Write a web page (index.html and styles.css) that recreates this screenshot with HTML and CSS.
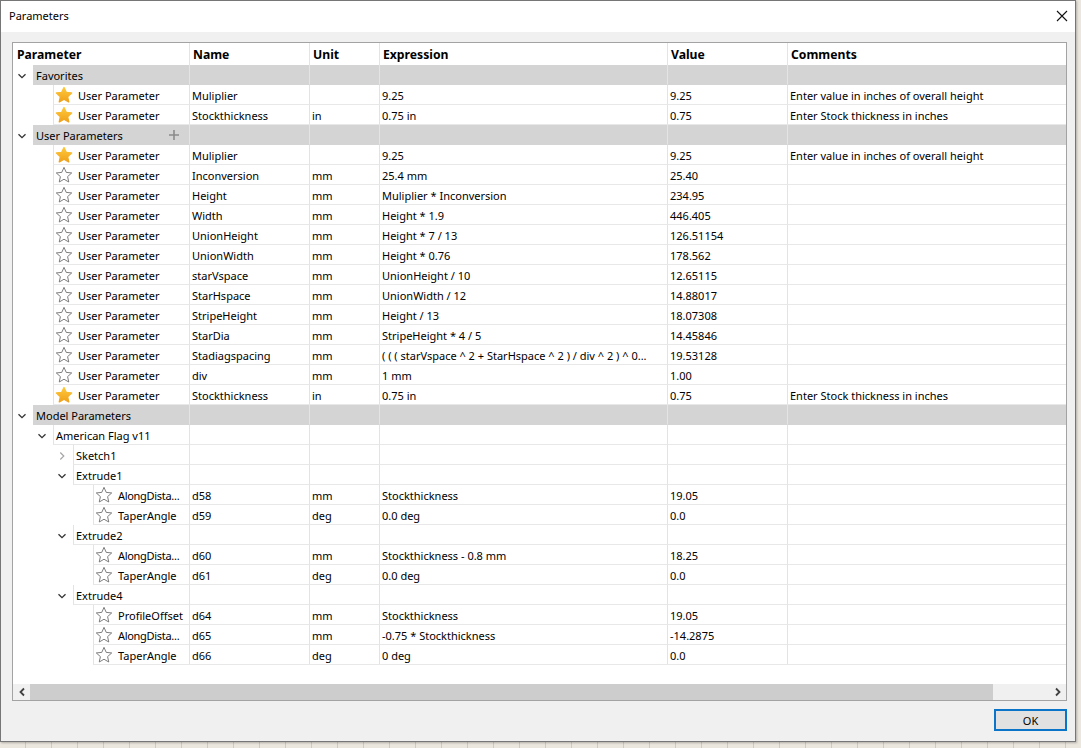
FILE: index.html
```html
<!DOCTYPE html>
<html>
<head>
<meta charset="utf-8">
<title>Parameters</title>
<link rel="stylesheet" href="styles.css">
</head>
<body>
<svg class="defs" width="0" height="0" aria-hidden="true">
  <defs>
    <linearGradient id="gold" x1="0" y1="0" x2="0" y2="1">
      <stop offset="0" stop-color="#fdc93b"/>
      <stop offset="1" stop-color="#f0a11a"/>
    </linearGradient>
    <symbol id="star-on" viewBox="0 0 20 20">
      <path d="M10 1.8 L12.47 7.1 L18.4 7.8 L13.99 11.8 L15.2 17.6 L10 14.7 L4.8 17.6 L6.01 11.8 L1.6 7.8 L7.53 7.1 Z" fill="url(#gold)" stroke="url(#gold)" stroke-width="1.6" stroke-linejoin="round"/>
    </symbol>
    <symbol id="star-off" viewBox="0 0 20 20">
      <path d="M10 1.5 L12.47 7.1 L18.56 7.72 L13.99 11.8 L15.29 17.78 L10 14.7 L4.71 17.78 L6.01 11.8 L1.44 7.72 L7.53 7.1 Z" fill="#fff" stroke="#6f6f6f" stroke-width="1" stroke-linejoin="miter"/>
    </symbol>
    <symbol id="chev-down" viewBox="0 0 10 10">
      <polyline points="1.5,3.2 5,6.7 8.5,3.2" fill="none" stroke="#333" stroke-width="1.3"/>
    </symbol>
    <symbol id="chev-right" viewBox="0 0 10 10">
      <polyline points="3.3,1.5 6.8,5 3.3,8.5" fill="none" stroke="#a6a6a6" stroke-width="1.2"/>
    </symbol>
  </defs>
</svg>

<div class="dialog">
  <div class="titlebar">
    <span class="title">Parameters</span>
    <svg class="close" width="12" height="12" viewBox="0 0 12 12"><path d="M1 1 L11 11 M11 1 L1 11" stroke="#111" stroke-width="1.1"/></svg>
  </div>

  <div class="content">
    <div class="frame">
      <div class="head">
        <div class="h first">Parameter</div>
        <div class="h">Name</div>
        <div class="h">Unit</div>
        <div class="h">Expression</div>
        <div class="h">Value</div>
        <div class="h">Comments</div>
      </div>

      <div class="rows">
        <!-- Favorites -->
        <div class="row group">
          <div class="c0 d0"><span class="tog"><svg><use href="#chev-down"/></svg></span><div class="cell txt">Favorites</div></div>
          <div class="c"></div><div class="c"></div><div class="c"></div><div class="c"></div><div class="c"></div>
        </div>
        <div class="row">
          <div class="c0 d1"><span class="tog"></span><div class="cell"><svg class="star"><use href="#star-on"/></svg>User Parameter</div></div>
          <div class="c">Muliplier</div><div class="c"></div><div class="c">9.25</div><div class="c">9.25</div><div class="c">Enter value in inches of overall height</div>
        </div>
        <div class="row">
          <div class="c0 d1"><span class="tog"></span><div class="cell"><svg class="star"><use href="#star-on"/></svg>User Parameter</div></div>
          <div class="c">Stockthickness</div><div class="c">in</div><div class="c">0.75 in</div><div class="c">0.75</div><div class="c">Enter Stock thickness in inches</div>
        </div>

        <!-- User Parameters -->
        <div class="row group">
          <div class="c0 d0"><span class="tog"><svg><use href="#chev-down"/></svg></span><div class="cell txt">User Parameters<svg class="plus" width="10" height="10" viewBox="0 0 10 10"><path d="M5 0 V10 M0 5 H10" stroke="#8b8b8b" stroke-width="1.6"/></svg></div></div>
          <div class="c"></div><div class="c"></div><div class="c"></div><div class="c"></div><div class="c"></div>
        </div>
        <div class="row">
          <div class="c0 d1"><span class="tog"></span><div class="cell"><svg class="star"><use href="#star-on"/></svg>User Parameter</div></div>
          <div class="c">Muliplier</div><div class="c"></div><div class="c">9.25</div><div class="c">9.25</div><div class="c">Enter value in inches of overall height</div>
        </div>
        <div class="row">
          <div class="c0 d1"><span class="tog"></span><div class="cell"><svg class="star"><use href="#star-off"/></svg>User Parameter</div></div>
          <div class="c">Inconversion</div><div class="c">mm</div><div class="c">25.4 mm</div><div class="c">25.40</div><div class="c"></div>
        </div>
        <div class="row">
          <div class="c0 d1"><span class="tog"></span><div class="cell"><svg class="star"><use href="#star-off"/></svg>User Parameter</div></div>
          <div class="c">Height</div><div class="c">mm</div><div class="c">Muliplier * Inconversion</div><div class="c">234.95</div><div class="c"></div>
        </div>
        <div class="row">
          <div class="c0 d1"><span class="tog"></span><div class="cell"><svg class="star"><use href="#star-off"/></svg>User Parameter</div></div>
          <div class="c">Width</div><div class="c">mm</div><div class="c">Height * 1.9</div><div class="c">446.405</div><div class="c"></div>
        </div>
        <div class="row">
          <div class="c0 d1"><span class="tog"></span><div class="cell"><svg class="star"><use href="#star-off"/></svg>User Parameter</div></div>
          <div class="c">UnionHeight</div><div class="c">mm</div><div class="c">Height * 7 / 13</div><div class="c">126.51154</div><div class="c"></div>
        </div>
        <div class="row">
          <div class="c0 d1"><span class="tog"></span><div class="cell"><svg class="star"><use href="#star-off"/></svg>User Parameter</div></div>
          <div class="c">UnionWidth</div><div class="c">mm</div><div class="c">Height * 0.76</div><div class="c">178.562</div><div class="c"></div>
        </div>
        <div class="row">
          <div class="c0 d1"><span class="tog"></span><div class="cell"><svg class="star"><use href="#star-off"/></svg>User Parameter</div></div>
          <div class="c">starVspace</div><div class="c">mm</div><div class="c">UnionHeight / 10</div><div class="c">12.65115</div><div class="c"></div>
        </div>
        <div class="row">
          <div class="c0 d1"><span class="tog"></span><div class="cell"><svg class="star"><use href="#star-off"/></svg>User Parameter</div></div>
          <div class="c">StarHspace</div><div class="c">mm</div><div class="c">UnionWidth / 12</div><div class="c">14.88017</div><div class="c"></div>
        </div>
        <div class="row">
          <div class="c0 d1"><span class="tog"></span><div class="cell"><svg class="star"><use href="#star-off"/></svg>User Parameter</div></div>
          <div class="c">StripeHeight</div><div class="c">mm</div><div class="c">Height / 13</div><div class="c">18.07308</div><div class="c"></div>
        </div>
        <div class="row">
          <div class="c0 d1"><span class="tog"></span><div class="cell"><svg class="star"><use href="#star-off"/></svg>User Parameter</div></div>
          <div class="c">StarDia</div><div class="c">mm</div><div class="c">StripeHeight * 4 / 5</div><div class="c">14.45846</div><div class="c"></div>
        </div>
        <div class="row">
          <div class="c0 d1"><span class="tog"></span><div class="cell"><svg class="star"><use href="#star-off"/></svg>User Parameter</div></div>
          <div class="c">Stadiagspacing</div><div class="c">mm</div><div class="c">( ( ( starVspace ^ 2 + StarHspace ^ 2 ) / div ^ 2 ) ^ 0...</div><div class="c">19.53128</div><div class="c"></div>
        </div>
        <div class="row">
          <div class="c0 d1"><span class="tog"></span><div class="cell"><svg class="star"><use href="#star-off"/></svg>User Parameter</div></div>
          <div class="c">div</div><div class="c">mm</div><div class="c">1 mm</div><div class="c">1.00</div><div class="c"></div>
        </div>
        <div class="row">
          <div class="c0 d1"><span class="tog"></span><div class="cell"><svg class="star"><use href="#star-on"/></svg>User Parameter</div></div>
          <div class="c">Stockthickness</div><div class="c">in</div><div class="c">0.75 in</div><div class="c">0.75</div><div class="c">Enter Stock thickness in inches</div>
        </div>

        <!-- Model Parameters -->
        <div class="row group">
          <div class="c0 d0"><span class="tog"><svg><use href="#chev-down"/></svg></span><div class="cell txt">Model Parameters</div></div>
          <div class="c"></div><div class="c"></div><div class="c"></div><div class="c"></div><div class="c"></div>
        </div>
        <div class="row">
          <div class="c0 d1"><span class="tog"><svg><use href="#chev-down"/></svg></span><div class="cell txt">American Flag v11</div></div>
          <div class="c"></div><div class="c"></div><div class="c"></div><div class="c"></div><div class="c"></div>
        </div>
        <div class="row">
          <div class="c0 d2"><span class="tog"><svg><use href="#chev-right"/></svg></span><div class="cell txt">Sketch1</div></div>
          <div class="c"></div><div class="c"></div><div class="c"></div><div class="c"></div><div class="c"></div>
        </div>
        <div class="row">
          <div class="c0 d2"><span class="tog"><svg><use href="#chev-down"/></svg></span><div class="cell txt">Extrude1</div></div>
          <div class="c"></div><div class="c"></div><div class="c"></div><div class="c"></div><div class="c"></div>
        </div>
        <div class="row">
          <div class="c0 d3"><span class="tog"></span><div class="cell"><svg class="star"><use href="#star-off"/></svg><span class="tight">AlongDista...</span></div></div>
          <div class="c">d58</div><div class="c">mm</div><div class="c">Stockthickness</div><div class="c">19.05</div><div class="c"></div>
        </div>
        <div class="row">
          <div class="c0 d3"><span class="tog"></span><div class="cell"><svg class="star"><use href="#star-off"/></svg>TaperAngle</div></div>
          <div class="c">d59</div><div class="c">deg</div><div class="c">0.0 deg</div><div class="c">0.0</div><div class="c"></div>
        </div>
        <div class="row">
          <div class="c0 d2"><span class="tog"><svg><use href="#chev-down"/></svg></span><div class="cell txt">Extrude2</div></div>
          <div class="c"></div><div class="c"></div><div class="c"></div><div class="c"></div><div class="c"></div>
        </div>
        <div class="row">
          <div class="c0 d3"><span class="tog"></span><div class="cell"><svg class="star"><use href="#star-off"/></svg><span class="tight">AlongDista...</span></div></div>
          <div class="c">d60</div><div class="c">mm</div><div class="c">Stockthickness - 0.8 mm</div><div class="c">18.25</div><div class="c"></div>
        </div>
        <div class="row">
          <div class="c0 d3"><span class="tog"></span><div class="cell"><svg class="star"><use href="#star-off"/></svg>TaperAngle</div></div>
          <div class="c">d61</div><div class="c">deg</div><div class="c">0.0 deg</div><div class="c">0.0</div><div class="c"></div>
        </div>
        <div class="row">
          <div class="c0 d2"><span class="tog"><svg><use href="#chev-down"/></svg></span><div class="cell txt">Extrude4</div></div>
          <div class="c"></div><div class="c"></div><div class="c"></div><div class="c"></div><div class="c"></div>
        </div>
        <div class="row">
          <div class="c0 d3"><span class="tog"></span><div class="cell"><svg class="star"><use href="#star-off"/></svg>ProfileOffset</div></div>
          <div class="c">d64</div><div class="c">mm</div><div class="c">Stockthickness</div><div class="c">19.05</div><div class="c"></div>
        </div>
        <div class="row">
          <div class="c0 d3"><span class="tog"></span><div class="cell"><svg class="star"><use href="#star-off"/></svg><span class="tight">AlongDista...</span></div></div>
          <div class="c">d65</div><div class="c">mm</div><div class="c">-0.75 * Stockthickness</div><div class="c">-14.2875</div><div class="c"></div>
        </div>
        <div class="row">
          <div class="c0 d3"><span class="tog"></span><div class="cell"><svg class="star"><use href="#star-off"/></svg>TaperAngle</div></div>
          <div class="c">d66</div><div class="c">deg</div><div class="c">0 deg</div><div class="c">0.0</div><div class="c"></div>
        </div>
      </div>

      <div class="spacer"></div>

      <div class="hscroll">
        <div class="arrow"><svg width="8" height="10" viewBox="0 0 8 10"><polyline points="6,1.5 2.5,5 6,8.5" fill="none" stroke="#404040" stroke-width="1.8"/></svg></div>
        <div class="thumb"></div>
        <div class="track"></div>
        <div class="arrow"><svg width="8" height="10" viewBox="0 0 8 10"><polyline points="2,1.5 5.5,5 2,8.5" fill="none" stroke="#404040" stroke-width="1.8"/></svg></div>
      </div>
    </div>
  </div>

  <div class="footer">
    <button class="ok">OK</button>
  </div>
</div>
</body>
</html>
```

FILE: styles.css
```css
* {
  box-sizing: border-box;
}

html, body {
  margin: 0;
  padding: 0;
}

body {
  width: 1081px;
  height: 748px;
  overflow: hidden;
  background-color: #ebe7df;
  background-image: repeating-linear-gradient(90deg, transparent 0, transparent 25px, #cfcbc3 25px, #cfcbc3 26px);
  font-family: "Noto Sans", "Segoe UI", "DejaVu Sans", sans-serif;
  font-size: 11px;
  color: #000;
}

.defs {
  position: absolute;
  width: 0;
  height: 0;
  overflow: hidden;
}

.dialog {
  width: 1076px;
  height: 742px;
  border: 1px solid #767676;
  background: #f0f0f0;
  display: flex;
  flex-direction: column;
  box-shadow: 1px 1px 2px rgba(0, 0, 0, 0.25);
}

.titlebar {
  height: 31px;
  flex: none;
  background: #fff;
  display: flex;
  align-items: center;
  padding: 0 7px 0 8px;
}

.title {
  font-size: 11px;
  flex: 1;
  padding-bottom: 2px;
}

.close {
  display: block;
  margin-bottom: 1px;
}

.content {
  flex: 1;
  padding: 10px 8px 0 11px;
  display: flex;
  flex-direction: column;
}

.frame {
  height: 659px;
  border: 1px solid #a3a3a3;
  background: #fff;
  display: flex;
  flex-direction: column;
}

.head,
.row {
  display: grid;
  grid-template-columns: 176px 120px 70px 288px 120px 279px;
}

.head {
  height: 22px;
  flex: none;
}

.h {
  font-weight: 700;
  font-size: 12.2px;
  line-height: 19px;
  padding-top: 2px;
  padding-left: 3px;
  border-left: 1px solid #e4e4e4;
  white-space: nowrap;
}

.h.first {
  border-left: none;
  padding-left: 4px;
}

.rows {
  flex: none;
}

.row {
  height: 20px;
}

.c {
  border-left: 1px solid #e3e3e3;
  border-bottom: 1px solid #e8e8e8;
  padding-left: 2px;
  padding-top: 2px;
  line-height: 17px;
  white-space: nowrap;
  overflow: hidden;
}

.c0 {
  display: flex;
  min-width: 0;
}

.d0 { padding-left: 0; }
.d1 { padding-left: 20px; }
.d2 { padding-left: 40px; }
.d3 { padding-left: 60px; }

.tog {
  width: 20px;
  flex: none;
  display: flex;
  align-items: center;
  justify-content: center;
  padding-right: 2px;
  padding-top: 1px;
}

.tog svg {
  width: 10px;
  height: 10px;
  display: block;
}

.cell {
  flex: 1;
  min-width: 0;
  display: flex;
  align-items: center;
  border-left: 1px solid #e3e3e3;
  border-bottom: 1px solid #e8e8e8;
  padding-left: 1px;
  padding-top: 2px;
  white-space: nowrap;
  overflow: hidden;
  line-height: 17px;
}

.cell.txt {
  padding-left: 2px;
}

.star {
  width: 18px;
  height: 18px;
  flex: none;
  margin-right: 5px;
  margin-top: -2px;
}

.tight {
  letter-spacing: -0.3px;
}

.plus {
  margin-left: 46px;
  flex: none;
  margin-top: -2px;
}

.group .cell,
.group .c {
  background: #d4d4d4;
  border-left-color: #e4e4e4;
  border-bottom-color: #d4d4d4;
}

.group .cell {
  border-left-color: #d4d4d4;
}

.spacer {
  flex: 1;
}

.hscroll {
  height: 16px;
  flex: none;
  display: grid;
  grid-template-columns: 17px 963px 56px 17px;
  background: #f0f0f0;
}

.arrow {
  display: flex;
  align-items: center;
  justify-content: center;
}

.thumb {
  background: #cdcdcd;
}

.track {
  background: #f0f0f0;
}

.footer {
  flex: 1;
  display: flex;
  justify-content: flex-end;
  align-items: flex-start;
  padding: 8px 8px 0 0;
}

.ok {
  width: 73px;
  height: 22px;
  border: 2px solid #0a74c9;
  background: #e1e1e1;
  font-family: "Noto Sans", "Segoe UI", sans-serif;
  font-size: 11px;
  color: #000;
  padding: 0;
  line-height: 17px;
}
```
